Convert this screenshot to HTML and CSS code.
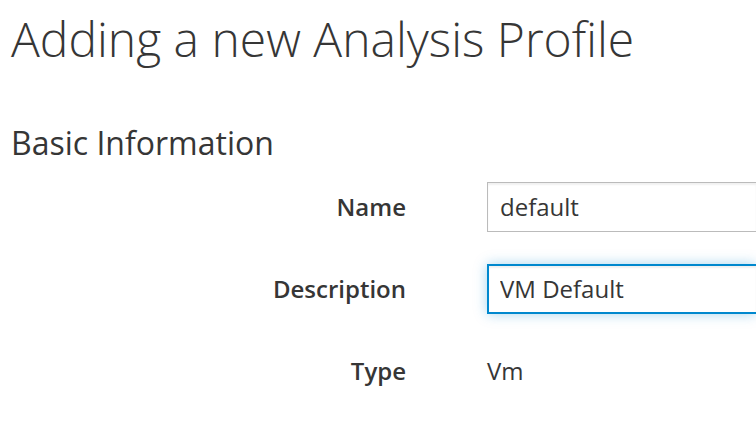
FILE: index.html
```html
<!DOCTYPE html>
<html lang="en">
<head>
<meta charset="utf-8">
<title>Adding a new Analysis Profile</title>
<link rel="stylesheet" href="styles.css">
</head>
<body>
<main class="page">
  <h1 class="title">Adding a new Analysis Profile</h1>
  <h3 class="section-title">Basic Information</h3>
  <form class="form">
    <label class="label" for="name">Name</label>
    <input class="field" id="name" type="text" value="default">
    <label class="label" for="desc">Description</label>
    <input class="field field-focus" id="desc" type="text" value="VM Default">
    <span class="label">Type</span>
    <span class="value">Vm</span>
  </form>
</main>
</body>
</html>
```
FILE: styles.css
```css
html, body {
  margin: 0;
  padding: 0;
  overflow: hidden;
  background: #fff;
}
body {
  font-family: "Open Sans", "Liberation Sans", sans-serif;
  color: #363636;
}
.page {
  padding: 13px 0 0 11px;
}
.title {
  margin: 0;
  font-size: 48px;
  font-weight: 300;
  line-height: 1.1;
}
.section-title {
  margin: 59px 0 0 0;
  font-size: 32px;
  font-weight: 400;
  line-height: 1.1;
}
.form {
  margin-top: 22px;
  display: grid;
  grid-template-columns: 395px 1fr;
  column-gap: 81px;
  row-gap: 32px;
  align-items: center;
}
.label {
  font-size: 24px;
  font-weight: 600;
  line-height: 50px;
  text-align: right;
}
.field {
  box-sizing: border-box;
  height: 50px;
  width: 100%;
  margin: 0;
  padding: 0 12px;
  border: 1px solid #bbb;
  border-right: 0;
  border-radius: 0;
  background: #fff;
  font-family: inherit;
  font-size: 24px;
  color: #363636;
  box-shadow: inset 0 2px 2px rgba(3, 3, 3, 0.06);
  outline: none;
}
.field-focus {
  border: 2px solid #0088ce;
  border-right: 0;
  padding: 0 11px;
  box-shadow: inset 0 2px 2px rgba(3, 3, 3, 0.06), 0 0 12px rgba(0, 136, 206, 0.35);
}
.value {
  font-size: 24px;
  line-height: 50px;
}
```
